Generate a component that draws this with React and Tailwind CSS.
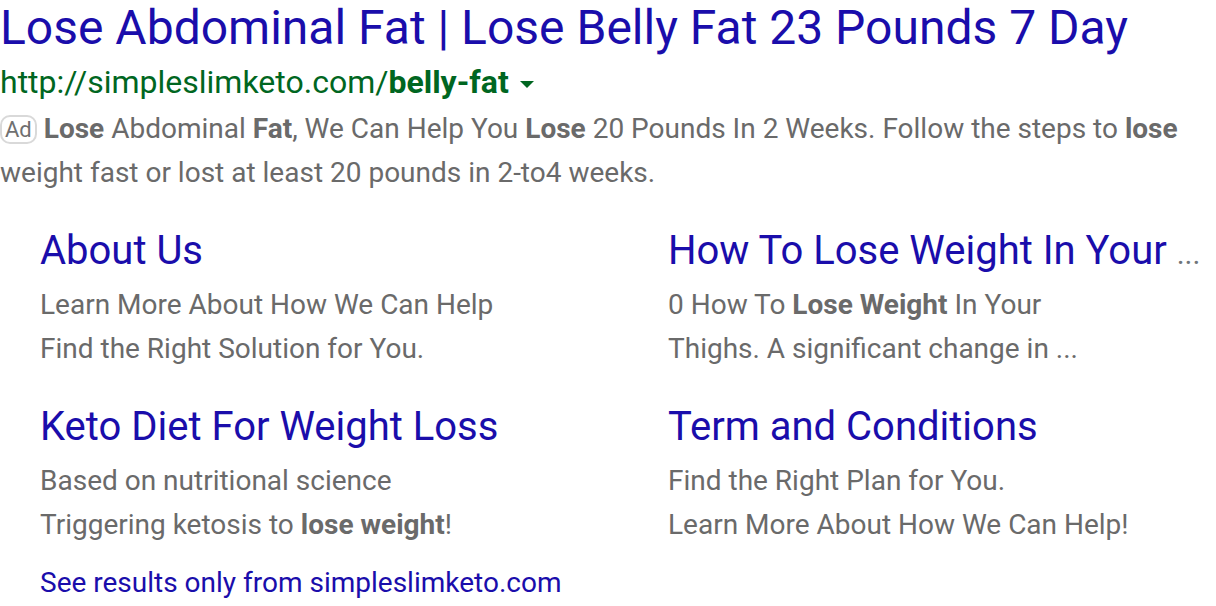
const sitelinks = [
  {
    title: "About Us",
    lines: [<>Learn More About How We Can Help</>, <>Find the Right Solution for You.</>],
  },
  {
    title: (
      <>
        How To Lose Weight In Your <span className="text-[#70757a] text-[30px] leading-none">...</span>
      </>
    ),
    lines: [
      <>
        0 How To <b>Lose Weight</b> In Your
      </>,
      <>Thighs. A significant change in ...</>,
    ],
  },
  {
    title: "Keto Diet For Weight Loss",
    lines: [
      <>Based on nutritional science</>,
      <>
        Triggering ketosis to <b>lose weight</b>!
      </>,
    ],
  },
  {
    title: "Term and Conditions",
    lines: [<>Find the Right Plan for You.</>, <>Learn More About How We Can Help!</>],
  },
];

const App = () => {
  return (
    <div className="w-[1216px] h-[606px] bg-white overflow-hidden font-['Roboto',sans-serif]">
      <a className="block text-[#1a0dab] text-[48px] leading-[56px] whitespace-nowrap">
        Lose Abdominal Fat | Lose Belly Fat 23 Pounds 7 Day
      </a>

      <div className="flex items-center text-[#006621] text-[32px] leading-[52px]">
        <span>
          http://simpleslimketo.com/<b>belly-fat</b>
        </span>
        <span className="ml-[11px] mt-[4px] w-0 h-0 border-l-[7px] border-r-[7px] border-t-[7px] border-l-transparent border-r-transparent border-t-[#006621]" />
      </div>

      {/* description */}
      <p className="text-[#6a6a6a] text-[28px] leading-[44px] mt-[-1px]">
        <span className="inline-block align-[1px] border-2 border-[#d9d9d9] rounded-[10px] text-[22px] leading-[25px] px-[3px] mr-[7px] text-[#707070]">
          Ad
        </span>
        <b>Lose</b> Abdominal <b>Fat</b>, We Can Help You <b>Lose</b> 20 Pounds In 2 Weeks.
        Follow the steps to <b>lose</b> weight fast or lost at least 20 pounds in 2-to4 weeks.
      </p>

      <div className="grid grid-cols-[628px_1fr] pl-[40px] mt-[24px] gap-y-[24px]">
        {sitelinks.map((s, i) => (
          <div key={i}>
            <a className="block text-[#1a0dab] text-[40px] leading-[64px] whitespace-nowrap">
              {s.title}
            </a>
            {s.lines.map((l, j) => (
              <p key={j} className="text-[#6a6a6a] text-[28px] leading-[44px]">
                {l}
              </p>
            ))}
          </div>
        ))}
      </div>

      <a className="block pl-[40px] mt-[14px] text-[#1a0dab] text-[28px] leading-[44px]">
        See results only from simpleslimketo.com
      </a>
    </div>
  );
};

export default App;
